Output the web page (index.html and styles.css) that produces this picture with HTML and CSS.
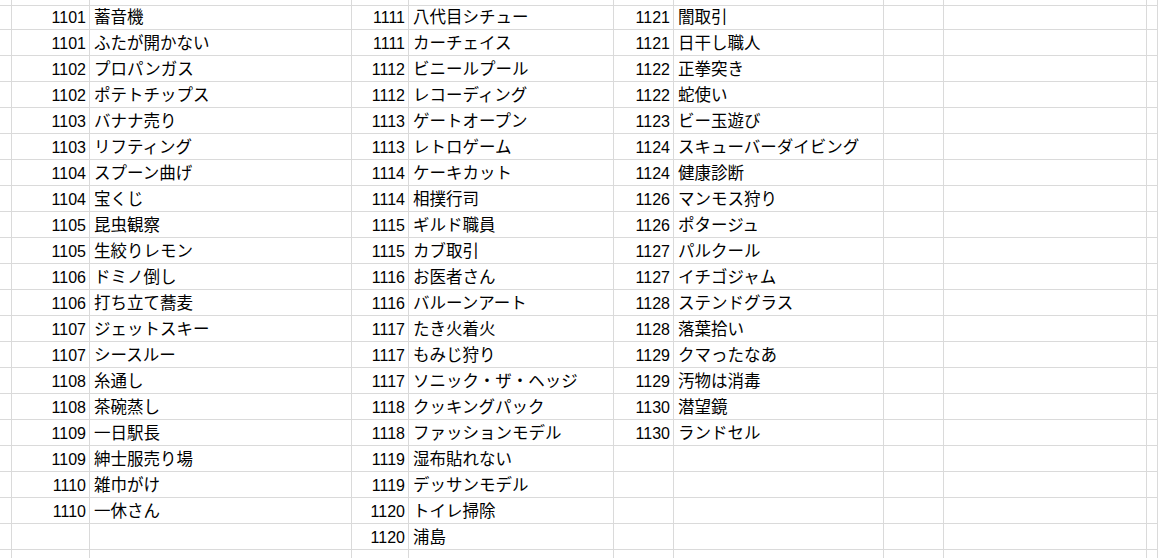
FILE: index.html
```html
<!DOCTYPE html>
<html lang="ja">
<head>
<meta charset="utf-8">
<title>Sheet</title>
<link rel="stylesheet" href="styles.css">
</head>
<body>
<div class="sheet">
<div class="c"></div><div class="c"></div><div class="c"></div><div class="c"></div><div class="c"></div><div class="c"></div><div class="c"></div><div class="c"></div><div class="c"></div><div class="c"></div>
<div class="c"></div><div class="c n">1101</div><div class="c t">蓄音機</div><div class="c n">1111</div><div class="c t">八代目シチュー</div><div class="c n">1121</div><div class="c t">闇取引</div><div class="c"></div><div class="c"></div><div class="c"></div>
<div class="c"></div><div class="c n">1101</div><div class="c t">ふたが開かない</div><div class="c n">1111</div><div class="c t">カーチェイス</div><div class="c n">1121</div><div class="c t">日干し職人</div><div class="c"></div><div class="c"></div><div class="c"></div>
<div class="c"></div><div class="c n">1102</div><div class="c t">プロパンガス</div><div class="c n">1112</div><div class="c t">ビニールプール</div><div class="c n">1122</div><div class="c t">正拳突き</div><div class="c"></div><div class="c"></div><div class="c"></div>
<div class="c"></div><div class="c n">1102</div><div class="c t">ポテトチップス</div><div class="c n">1112</div><div class="c t">レコーディング</div><div class="c n">1122</div><div class="c t">蛇使い</div><div class="c"></div><div class="c"></div><div class="c"></div>
<div class="c"></div><div class="c n">1103</div><div class="c t">バナナ売り</div><div class="c n">1113</div><div class="c t">ゲートオープン</div><div class="c n">1123</div><div class="c t">ビー玉遊び</div><div class="c"></div><div class="c"></div><div class="c"></div>
<div class="c"></div><div class="c n">1103</div><div class="c t">リフティング</div><div class="c n">1113</div><div class="c t">レトロゲーム</div><div class="c n">1124</div><div class="c t">スキューバーダイビング</div><div class="c"></div><div class="c"></div><div class="c"></div>
<div class="c"></div><div class="c n">1104</div><div class="c t">スプーン曲げ</div><div class="c n">1114</div><div class="c t">ケーキカット</div><div class="c n">1124</div><div class="c t">健康診断</div><div class="c"></div><div class="c"></div><div class="c"></div>
<div class="c"></div><div class="c n">1104</div><div class="c t">宝くじ</div><div class="c n">1114</div><div class="c t">相撲行司</div><div class="c n">1126</div><div class="c t">マンモス狩り</div><div class="c"></div><div class="c"></div><div class="c"></div>
<div class="c"></div><div class="c n">1105</div><div class="c t">昆虫観察</div><div class="c n">1115</div><div class="c t">ギルド職員</div><div class="c n">1126</div><div class="c t">ポタージュ</div><div class="c"></div><div class="c"></div><div class="c"></div>
<div class="c"></div><div class="c n">1105</div><div class="c t">生絞りレモン</div><div class="c n">1115</div><div class="c t">カブ取引</div><div class="c n">1127</div><div class="c t">パルクール</div><div class="c"></div><div class="c"></div><div class="c"></div>
<div class="c"></div><div class="c n">1106</div><div class="c t">ドミノ倒し</div><div class="c n">1116</div><div class="c t">お医者さん</div><div class="c n">1127</div><div class="c t">イチゴジャム</div><div class="c"></div><div class="c"></div><div class="c"></div>
<div class="c"></div><div class="c n">1106</div><div class="c t">打ち立て蕎麦</div><div class="c n">1116</div><div class="c t">バルーンアート</div><div class="c n">1128</div><div class="c t">ステンドグラス</div><div class="c"></div><div class="c"></div><div class="c"></div>
<div class="c"></div><div class="c n">1107</div><div class="c t">ジェットスキー</div><div class="c n">1117</div><div class="c t">たき火着火</div><div class="c n">1128</div><div class="c t">落葉拾い</div><div class="c"></div><div class="c"></div><div class="c"></div>
<div class="c"></div><div class="c n">1107</div><div class="c t">シースルー</div><div class="c n">1117</div><div class="c t">もみじ狩り</div><div class="c n">1129</div><div class="c t">クマったなあ</div><div class="c"></div><div class="c"></div><div class="c"></div>
<div class="c"></div><div class="c n">1108</div><div class="c t">糸通し</div><div class="c n">1117</div><div class="c t">ソニック・ザ・ヘッジ</div><div class="c n">1129</div><div class="c t">汚物は消毒</div><div class="c"></div><div class="c"></div><div class="c"></div>
<div class="c"></div><div class="c n">1108</div><div class="c t">茶碗蒸し</div><div class="c n">1118</div><div class="c t">クッキングパック</div><div class="c n">1130</div><div class="c t">潜望鏡</div><div class="c"></div><div class="c"></div><div class="c"></div>
<div class="c"></div><div class="c n">1109</div><div class="c t">一日駅長</div><div class="c n">1118</div><div class="c t">ファッションモデル</div><div class="c n">1130</div><div class="c t">ランドセル</div><div class="c"></div><div class="c"></div><div class="c"></div>
<div class="c"></div><div class="c n">1109</div><div class="c t">紳士服売り場</div><div class="c n">1119</div><div class="c t">湿布貼れない</div><div class="c"></div><div class="c"></div><div class="c"></div><div class="c"></div><div class="c"></div>
<div class="c"></div><div class="c n">1110</div><div class="c t">雑巾がけ</div><div class="c n">1119</div><div class="c t">デッサンモデル</div><div class="c"></div><div class="c"></div><div class="c"></div><div class="c"></div><div class="c"></div>
<div class="c"></div><div class="c n">1110</div><div class="c t">一休さん</div><div class="c n">1120</div><div class="c t">トイレ掃除</div><div class="c"></div><div class="c"></div><div class="c"></div><div class="c"></div><div class="c"></div>
<div class="c"></div><div class="c"></div><div class="c"></div><div class="c n">1120</div><div class="c t">浦島</div><div class="c"></div><div class="c"></div><div class="c"></div><div class="c"></div><div class="c"></div>
<div class="c"></div><div class="c"></div><div class="c"></div><div class="c"></div><div class="c"></div><div class="c"></div><div class="c"></div><div class="c"></div><div class="c"></div><div class="c"></div>
</div>
</body>
</html>
```

FILE: styles.css
```css
html, body {
  margin: 0;
  padding: 0;
  background: #ffffff;
  overflow: hidden;
}

.sheet {
  display: grid;
  grid-template-columns: 12px 78px 262px 57px 205px 60px 210px 60px 203px 1fr;
  grid-template-rows: 4px;
  grid-auto-rows: 26px;
  width: 1158px;
  height: 558px;
  overflow: hidden;
  font-family: "Liberation Sans", "Noto Sans CJK JP", sans-serif;
  font-size: 16px;
  color: #000000;
}

.c {
  box-sizing: border-box;
  border-right: 1px solid #dadada;
  border-bottom: 1px solid #dadada;
  padding: 5px 4px 0 4px;
  line-height: 17px;
  white-space: nowrap;
  overflow: hidden;
}

.n {
  text-align: right;
  padding-right: 3px;
}

.t {
  text-align: left;
  font-size: 16.5px;
}
```
